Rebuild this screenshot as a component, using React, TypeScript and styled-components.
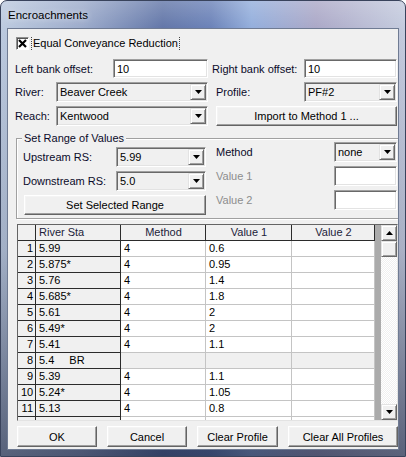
import React from "react";
import styled, { createGlobalStyle } from "styled-components";

const GlobalStyle = createGlobalStyle`
  html, body {
    margin: 0;
    padding: 0;
  }
  body {
    font-family: "Liberation Sans", Arial, sans-serif;
    font-size: 11px;
    color: #000;
    background: #fff;
  }
`;

interface rowInt {
  n: number;
  sta: string;
  tag?: string;
  method: string;
  v1: string;
  v2?: string;
  shade?: boolean;
}

const rows: rowInt[] = [
  { n: 1, sta: "5.99", method: "4", v1: "0.6" },
  { n: 2, sta: "5.875*", method: "4", v1: "0.95" },
  { n: 3, sta: "5.76", method: "4", v1: "1.4" },
  { n: 4, sta: "5.685*", method: "4", v1: "1.8" },
  { n: 5, sta: "5.61", method: "4", v1: "2" },
  { n: 6, sta: "5.49*", method: "4", v1: "2" },
  { n: 7, sta: "5.41", method: "4", v1: "1.1" },
  { n: 8, sta: "5.4", tag: "BR", method: "", v1: "", shade: true },
  { n: 9, sta: "5.39", method: "4", v1: "1.1" },
  { n: 10, sta: "5.24*", method: "4", v1: "1.05" },
  { n: 11, sta: "5.13", method: "4", v1: "0.8" },
  { n: 12, sta: "", method: "", v1: "" },
];

const Window = styled.div`
  width: 406px;
  height: 457px;
  box-sizing: border-box;
  border: 1px solid #39435c;
  border-radius: 7px 7px 0 0;
  padding: 0 7px 7px 7px;
  display: flex;
  flex-direction: column;
  background:
    linear-gradient(180deg, rgba(255, 255, 255, 0.2) 0, rgba(255, 255, 255, 0) 28px, rgba(20, 28, 55, 0.15) 55%, rgba(20, 28, 55, 0.6) 100%),
    linear-gradient(90deg, #bccadf 0%, #9cabcb 20%, #6276a8 40%, #6b82b8 52%, #93aedc 62%, #aba8c7 78%, #c4cbde 100%);
`;

const TitleBar = styled.div`
  height: 28px;
  display: flex;
  align-items: center;
  font-size: 11.5px;
  color: #000;
  text-shadow: 0 0 6px rgba(255, 255, 255, 0.8);
`;

const Client = styled.div`
  width: 390px;
  height: 420px;
  flex: none;
  background: #f0f0f0;
  box-shadow: 0 0 0 1px #6f7b93;
  overflow: hidden;
`;

const CheckRow = styled.div`
  display: flex;
  align-items: center;
  height: 15px;
  margin: 7px 0 0 8px;
`;

const CheckBox = styled.div`
  width: 13px;
  height: 13px;
  box-sizing: border-box;
  border: 1px solid;
  border-color: #8e8f8f #fff #fff #8e8f8f;
  box-shadow: inset 1px 1px #555;
  background: #fff;
  display: flex;
  align-items: center;
  justify-content: center;
`;

const FocusLabel = styled.div`
  margin-left: 2px;
  padding: 0 1px;
  line-height: 13px;
  border-left: 1px dotted #444;
  border-right: 1px dotted #444;
  white-space: nowrap;
`;

const FormGrid = styled.div`
  display: grid;
  grid-template-columns: 193px 185px;
  grid-template-rows: 19px 20px 20px;
  column-gap: 4px;
  row-gap: 4px;
  margin: 8px 0 0 7px;
`;

const Field = styled.div<{ $indent?: number }>`
  display: flex;
  align-items: center;
  padding-left: ${(p) => p.$indent || 0}px;
  min-width: 0;
`;

const Label = styled.span<{ $muted?: boolean }>`
  white-space: nowrap;
  color: ${(p) => (p.$muted ? "#8d8d8d" : "#0b0b2a")};
`;

const Sunken = styled.div<{ $width: number; $grey?: boolean }>`
  width: ${(p) => p.$width}px;
  height: 100%;
  margin-left: auto;
  box-sizing: border-box;
  border: 1px solid;
  border-color: #a0a0a0 #fff #fff #a0a0a0;
  box-shadow: inset 1px 1px #696969, inset -1px -1px #e3e3e3;
  background: ${(p) => (p.$grey ? "#f0f0f0" : "#fff")};
  display: flex;
  align-items: center;
  padding: 1px 1px 1px 3px;
  white-space: nowrap;
`;

const ComboText = styled.span`
  flex: 1;
  overflow: hidden;
`;

const DropButton = styled.div`
  width: 16px;
  height: 16px;
  box-sizing: border-box;
  background: #f0f0f0;
  border: 1px solid;
  border-color: #e3e3e3 #696969 #696969 #e3e3e3;
  box-shadow: inset 1px 1px #fff, inset -1px -1px #a0a0a0;
  display: flex;
  align-items: center;
  justify-content: center;
`;

const RaisedButton = styled.button<{ $width: number; $height?: number; $left?: number }>`
  width: ${(p) => p.$width}px;
  height: ${(p) => p.$height || 21}px;
  margin: 0 0 0 ${(p) => p.$left || 0}px;
  padding: 0;
  box-sizing: border-box;
  font-family: inherit;
  font-size: 11px;
  color: #000;
  background: #f0f0f0;
  border: 1px solid;
  border-color: #fff #646464 #646464 #fff;
  box-shadow: inset -1px -1px #a0a0a0, inset 1px 1px #f4f4f4;
  white-space: nowrap;
`;

const GroupBox = styled.div`
  position: relative;
  display: flex;
  height: 81px;
  box-sizing: border-box;
  margin: 12px -6px 0 8px;
  border: 1px solid #a0a0a0;
  box-shadow: inset 1px 1px #fff, 1px 1px #fff;
`;

const Legend = styled.span`
  position: absolute;
  top: -8px;
  left: 5px;
  padding: 0 2px;
  line-height: 14px;
  background: #f0f0f0;
  color: #0b0b2a;
`;

const GroupColumn = styled.div<{ $top: number; $left: number; $width: number }>`
  display: flex;
  flex-direction: column;
  gap: 4px;
  width: ${(p) => p.$width}px;
  margin-left: ${(p) => p.$left}px;
  padding-top: ${(p) => p.$top}px;
`;

const GroupRow = styled.div`
  display: flex;
  align-items: center;
  height: 20px;
`;

const TableFrame = styled.div`
  display: flex;
  width: 381px;
  height: 197px;
  box-sizing: border-box;
  margin: 5px 0 0 9px;
  border: 1px solid;
  border-color: #646464 #e3e3e3 #e3e3e3 #646464;
`;

const GridArea = styled.div`
  flex: 1;
  overflow: hidden;
  background: #ababab;
  display: grid;
  grid-template-columns: 18px 85px 85px 86px 83px;
  grid-auto-rows: 16px;
  align-content: start;
  justify-content: start;
`;

const Cell = styled.div<{ $fixed?: boolean; $shade?: boolean; $align?: string }>`
  box-sizing: border-box;
  border-right: 1px solid ${(p) => (p.$fixed ? "#2b2b2b" : "#c4c4c4")};
  border-bottom: 1px solid ${(p) => (p.$fixed ? "#2b2b2b" : "#c4c4c4")};
  background: ${(p) => (p.$fixed || p.$shade ? "#f0f0f0" : "#fff")};
  text-align: ${(p) => p.$align || "left"};
  padding: 0 2px 0 3px;
  line-height: 15px;
  white-space: nowrap;
  overflow: hidden;
`;

const HeadCell = styled(Cell)`
  color: #1c1c3a;
`;

const Tag = styled.span`
  margin-left: 15px;
`;

const ScrollBar = styled.div`
  width: 16px;
  display: flex;
  flex-direction: column;
  background: repeating-conic-gradient(#f0f0f0 0 25%, #fff 0 50%) 0 0 / 2px 2px;
`;

const ScrollPart = styled.div`
  height: 16px;
  flex: none;
  box-sizing: border-box;
  background: #f0f0f0;
  border: 1px solid;
  border-color: #e3e3e3 #696969 #696969 #e3e3e3;
  box-shadow: inset 1px 1px #fff, inset -1px -1px #a0a0a0;
  display: flex;
  align-items: center;
  justify-content: center;
`;

const Track = styled.div`
  flex: 1;
`;

const ButtonBar = styled.div`
  display: flex;
  justify-content: space-between;
  width: 381px;
  margin: 5px 0 0 9px;
`;

const XMark = () => (
  <svg width="9" height="9" viewBox="0 0 9 9">
    <path d="M1 1 L8 8 M8 1 L1 8" stroke="#000" strokeWidth="2.2" />
  </svg>
);

const Arrow = ({ up }: { up?: boolean }) => (
  <svg width="7" height="4" viewBox="0 0 7 4">
    <path d={up ? "M3.5 0 L7 4 L0 4 Z" : "M0 0 L7 0 L3.5 4 Z"} fill="#000" />
  </svg>
);

const Combo = ({ width, text }: { width: number; text: string }) => (
  <Sunken $width={width} $grey>
    <ComboText>{text}</ComboText>
    <DropButton>
      <Arrow />
    </DropButton>
  </Sunken>
);

const App = (): JSX.Element => {
  return (
    <>
      <GlobalStyle />
      <Window>
        <TitleBar>Encroachments</TitleBar>
        <Client>
          <CheckRow>
            <CheckBox>
              <XMark />
            </CheckBox>
            <FocusLabel>Equal Conveyance Reduction</FocusLabel>
          </CheckRow>

          <FormGrid>
            <Field>
              <Label>Left bank offset:</Label>
              <Sunken $width={95}>10</Sunken>
            </Field>
            <Field>
              <Label>Right bank offset:</Label>
              <Sunken $width={93}>10</Sunken>
            </Field>
            <Field>
              <Label>River:</Label>
              <Combo width={152} text="Beaver Creek" />
            </Field>
            <Field $indent={4}>
              <Label>Profile:</Label>
              <Combo width={93} text="PF#2" />
            </Field>
            <Field>
              <Label>Reach:</Label>
              <Combo width={152} text="Kentwood" />
            </Field>
            <Field $indent={4}>
              <RaisedButton $width={181} $height={20}>
                Import to Method 1 ...
              </RaisedButton>
            </Field>
          </FormGrid>

          <GroupBox>
            <Legend>Set Range of Values</Legend>
            <GroupColumn $top={8} $left={6} $width={183}>
              <GroupRow>
                <Label>Upstream RS:</Label>
                <Combo width={90} text="5.99" />
              </GroupRow>
              <GroupRow>
                <Label>Downstream RS:</Label>
                <Combo width={90} text="5.0" />
              </GroupRow>
              <GroupRow>
                <RaisedButton $width={182} $height={20} $left={1}>
                  Set Selected Range
                </RaisedButton>
              </GroupRow>
            </GroupColumn>
            <GroupColumn $top={3} $left={10} $width={181}>
              <GroupRow>
                <Label>Method</Label>
                <Combo width={63} text="none" />
              </GroupRow>
              <GroupRow>
                <Label $muted>Value 1</Label>
                <Sunken $width={63} />
              </GroupRow>
              <GroupRow>
                <Label $muted>Value 2</Label>
                <Sunken $width={63} />
              </GroupRow>
            </GroupColumn>
          </GroupBox>

          <TableFrame>
            <GridArea>
              <HeadCell $fixed />
              <HeadCell $fixed>River Sta</HeadCell>
              <HeadCell $fixed $align="center">Method</HeadCell>
              <HeadCell $fixed $align="center">Value 1</HeadCell>
              <HeadCell $fixed $align="center">Value 2</HeadCell>
              {rows.map((r) => (
                <React.Fragment key={r.n}>
                  <Cell $fixed $align="right">
                    {r.sta ? r.n : ""}
                  </Cell>
                  <Cell $fixed>
                    {r.sta}
                    {r.tag && <Tag>{r.tag}</Tag>}
                  </Cell>
                  <Cell $shade={r.shade}>{r.method}</Cell>
                  <Cell $shade={r.shade}>{r.v1}</Cell>
                  <Cell $shade={r.shade}>{r.v2}</Cell>
                </React.Fragment>
              ))}
            </GridArea>
            <ScrollBar>
              <ScrollPart>
                <Arrow up />
              </ScrollPart>
              <ScrollPart />
              <Track />
              <ScrollPart>
                <Arrow />
              </ScrollPart>
            </ScrollBar>
          </TableFrame>

          <ButtonBar>
            <RaisedButton $width={80}>OK</RaisedButton>
            <RaisedButton $width={80}>Cancel</RaisedButton>
            <RaisedButton $width={81}>Clear Profile</RaisedButton>
            <RaisedButton $width={110}>Clear All Profiles</RaisedButton>
          </ButtonBar>
        </Client>
      </Window>
    </>
  );
};

export default App;
